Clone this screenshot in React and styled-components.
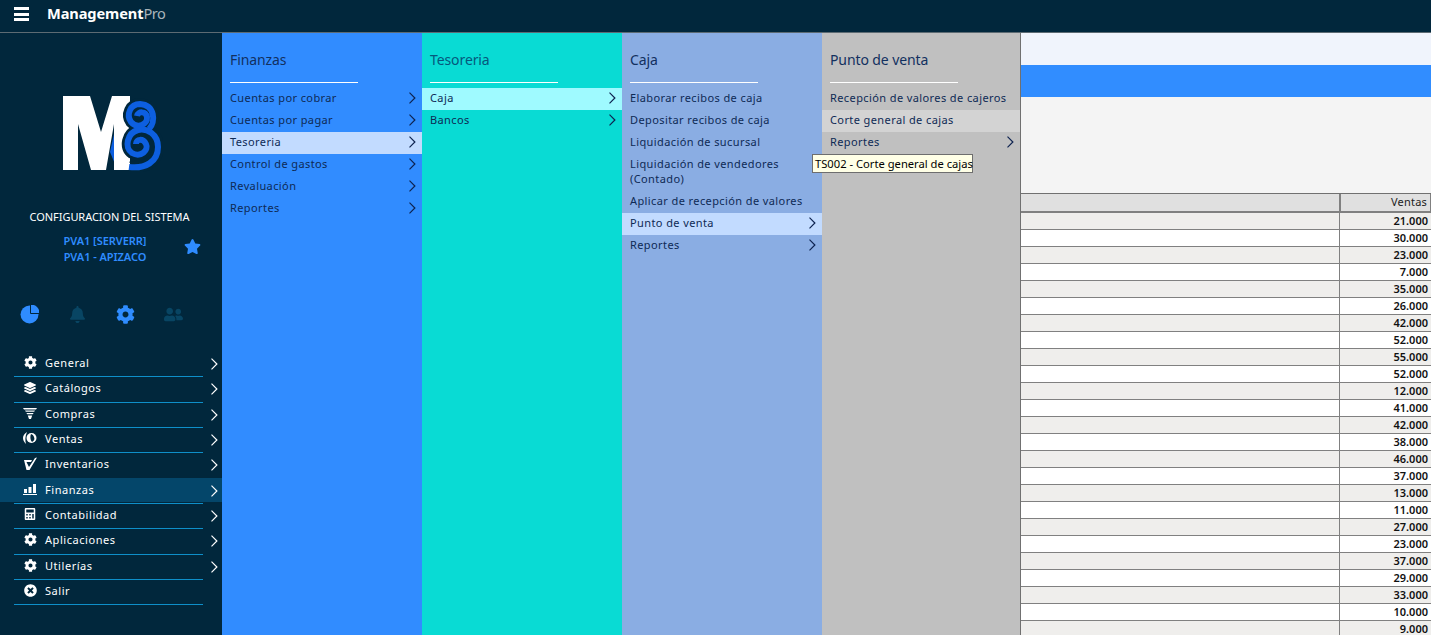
import React from "react";
import styled, { createGlobalStyle } from "styled-components";
import { FaCog, FaBell, FaUserFriends, FaStar, FaLayerGroup, FaTimesCircle, FaCalculator } from "react-icons/fa";

const Global = createGlobalStyle`
  html, body { margin: 0; padding: 0; height: 100%; overflow: hidden; background: #f4f4f4; }
  * { box-sizing: border-box; }
  body { font-family: "Noto Sans", "Open Sans", sans-serif; }
`;

const Page = styled.div`
  width: 1431px; height: 635px; display: flex; flex-direction: column; overflow: hidden; position: relative;
`;
const TopBar = styled.header`
  height: 33px; flex: none; background: #01273c; border-bottom: 1px solid #5d6b73;
  display: flex; align-items: center; padding: 0 0 4px 14px;
`;
const Burger = styled.div`
  width: 15px; height: 14px; display: flex; flex-direction: column; justify-content: space-between;
  & > i { display: block; height: 3px; background: #fff; }
`;
const Brand = styled.div`
  margin: 0 0 2px 18px; font-size: 14.6px; font-weight: 700; color: #fff; letter-spacing: -0.1px; line-height: 20px;
  & > span { font-weight: 400; color: #a9b4ba; letter-spacing: -0.5px; }
`;
const Body = styled.div`
  flex: 1; display: flex; min-height: 0;
`;
const Sidebar = styled.aside`
  width: 222px; flex: none; background: #01273c; display: flex; flex-direction: column; align-items: stretch;
`;
const LogoWrap = styled.div`
  height: 174px; display: flex; padding: 63px 0 0 63px; flex: none;
`;
const SysTitle = styled.div`
  color: #fff; font-size: 11px; line-height: 14px; text-align: center; padding-right: 3px; margin-top: 3px; letter-spacing: -0.05px;
`;
const Branch = styled.div`
  position: relative; margin-top: 9px; padding: 0 12px 0 0; text-align: center; color: #2f8cff;
  font-size: 11px; font-weight: 600; line-height: 16px; letter-spacing: -0.05px;
  & > svg { position: absolute; right: 21px; top: 5px; }
`;
const Quick = styled.div`
  display: flex; gap: 28px; padding: 0 0 0 19px; margin-top: 39px; height: 47px; flex: none;
`;
const QuickIcon = styled.div`
  width: 20px; height: 20px; display: flex; align-items: center; justify-content: center;
  color: ${p => p.$on ? "#2f8cff" : "#084563"};
`;
const Menu = styled.nav`
  display: flex; flex-direction: column;
`;
const MenuRow = styled.div`
  height: 25.33px; position: relative; display: flex; align-items: center; padding: 0 0 2.4px 23px;
  color: #fff; font-size: 11px; letter-spacing: 0.55px;
  background: ${p => p.$on ? "linear-gradient(#04466a 0 24px, transparent 24px)" : "none"};
  &::after { content: ""; position: absolute; left: 14px; width: 189px; bottom: -1px; height: 1px; background: #0e8fc9; }
`;
const MenuIcon = styled.span`
  width: 14px; height: 14px; display: flex; align-items: center; justify-content: center; margin-right: 8px; color: #fff;
`;
const MenuChev = styled.span`
  position: absolute; right: 4px; top: 7px; display: flex;
`;
const Panel = styled.section`
  width: ${p => p.$w}px; flex: none; background: ${p => p.$bg}; color: #0e2a55; padding-top: 19px; position: relative;
`;
const PanelTitle = styled.h2`
  margin: 0; font-weight: 400; font-size: 14px; line-height: 16px; padding-left: 8px; color: ${p => p.$c || "#12305f"}; letter-spacing: -0.1px;
`;
const Rule = styled.div`
  margin: 14px 0 5px 8px; width: 128px; height: 1px; background: #fff;
`;
const Row = styled.div`
  min-height: 22px; padding: 2px ${p => p.$ch ? 20 : 8}px 5px 8px; font-size: 11px; line-height: 15px; letter-spacing: 0.4px;
  position: relative; background: ${p => p.$hl || "none"}; color: #0e2a55;
`;
const RowChev = styled.span`
  position: absolute; right: 6px; top: 4px; display: flex;
`;
const Tip = styled.div`
  position: absolute; left: -10px; top: 121px; width: 161px; height: 19px; z-index: 3;
  background: #ffffe6; border: 1px solid #6e6e6e; color: #000; font-size: 11.2px; line-height: 17px; padding-left: 2px; white-space: nowrap;
`;
const Main = styled.main`
  flex: 1; min-width: 0; border-left: 1px solid #707070; display: flex; flex-direction: column; background: #f4f4f4;
`;
const BandLight = styled.div`height: 32px; flex: none; background: #f0f4fc;`;
const BandBlue = styled.div`height: 32px; flex: none; background: #318dff;`;
const Filter = styled.div`height: 96px; flex: none; background: #f4f4f4;`;
const Grid = styled.div`
  display: grid; grid-template-columns: 319px 91px; grid-template-rows: 19px; grid-auto-rows: 17px; border-top: 1px solid #707070;
`;
const Head = styled.div`
  height: 19px; background: #e0e0e0; border-bottom: 2px solid #808080; border-right: 1px solid #808080;
  font-size: 11px; line-height: 16px; text-align: right; padding-right: 3px; color: #222;
  letter-spacing: 0.2px;
  &:last-of-type { border-left: 1px solid #808080; border-right: 1px solid #808080; }
`;
const HeadRow = styled.div`
  grid-column: 1 / 3; display: grid; grid-template-columns: 319px 91px; height: 19px;
`;
const Cell = styled.div`
  background: ${p => p.$odd ? "#efeeec" : "#fff"}; border-bottom: 1px solid #808080; border-right: ${p => p.$first ? "1px solid #808080" : "none"};
  font-size: 11px; font-weight: 600; line-height: 16px; text-align: right; padding-right: 3px; color: #111;
`;

const Chev = ({ c = "#0e2350", s = 12 }) => (
  <svg width={s * 0.7} height={s} viewBox="0 0 7 12" fill="none" stroke={c} strokeWidth="1.2"><path d="M0.8 0.6 L6.2 6 L0.8 11.4" /></svg>
);

const swirlTop = "M86 33 C93 26 92 9 77 8 C67 8 63 19 68 26 C74 33 85 29 84 21 C83 15 75 15 74 20";
const swirlLow = "M66 71 C82 73 95 66 95 51 C95 38 84 32 75 34 C64 37 61 52 69 57 C78 62 86 54 83 48 C80 42 73 43 73 48";

const Logo = () => (
  <svg width="100" height="76" viewBox="0 0 100 76">
    <path d="M54 25 L47 56 L52 68 L56 66 Z" fill="#0d5fe0" />
    <path d="M0 0 H27 L38 36 L49 0 H67 V74 H51 V28 L43 74 H28 L15 28 V74 H0 Z" fill="#fff" />
    <g fill="none" stroke="#01273c" strokeWidth="11.500">
      <path d={swirlTop} />
      <path d={swirlLow} />
    </g>
    <path d="M63 74 H72 V80 H63Z" fill="#01273c" />
    <path d="M64 74 V67 L67 67 V74Z" fill="#fff" />
    <g fill="none" stroke="#0d5fe0" strokeWidth="6">
      <path d={swirlTop} />
      <path d={swirlLow} />
    </g>
  </svg>
);

const Pie = () => (
  <svg width="19" height="19" viewBox="0 0 19 19">
    <circle cx="9.500" cy="9.500" r="9" fill="#2f8cff" />
    <path d="M9.500 0 V9.500 H19" fill="none" stroke="#01273c" strokeWidth="1" transform="translate(1,-1)" />
    <path d="M10 0.500 A8.500 8.500 0 0 1 18.500 9 H10 Z" fill="#2f8cff" transform="translate(1,-1)" />
  </svg>
);
const Basket = () => (
  <svg width="14" height="12" viewBox="0 0 14 12" fill="#fff"><path d="M0 1h14l-1 1.500H1zM2 3.500h10l-.8 1.200H2.800zM3.400 6h7.200l-.8 1.200H4.200zM4.800 8.400h4.400L8 12H6z" /></svg>
);
const Moon = () => (
  <svg width="14" height="14" viewBox="0 0 14 14"><path d="M4 1C1 3 0 5 0 7c0 2 1 4 3 6C2 10 2 5 4 1Z" fill="#fff"/><circle cx="8.500" cy="7" r="5" fill="#fff"/><path d="M8 3c-1 2-1 6 1 8 2-1 3-3 2-5-.4-1.500-1.500-2.600-3-3Z" fill="#01273c"/></svg>
);
const Check = () => (
  <svg width="14" height="13" viewBox="0 0 14 13" fill="#fff"><path d="M1 3h8L8 5H3.500l2.500 5L12 1l2-.5L6.500 13H3.500z" /></svg>
);
const Bars = () => (
  <svg width="14" height="12" viewBox="0 0 14 12" fill="#fff"><path d="M1 6h3v4H1zM5.500 4h3v6h-3zM10 1h3v9h-3zM0 11h14v1H0z" /></svg>
);

const menu = [
  ["General", <FaCog size={13} />], ["Catálogos", <FaLayerGroup size={12} />], ["Compras", <Basket />], ["Ventas", <Moon />],
  ["Inventarios", <Check />], ["Finanzas", <Bars />, true], ["Contabilidad", <FaCalculator size={12} />],
  ["Aplicaciones", <FaCog size={13} />], ["Utilerías", <FaCog size={13} />], ["Salir", <FaTimesCircle size={13} />],
];
const values = ["21.000","30.000","23.000","7.000","35.000","26.000","42.000","52.000","55.000","52.000","12.000","41.000","42.000","38.000","46.000","37.000","13.000","11.000","27.000","23.000","37.000","29.000","33.000","10.000","9.000"];

const panels = [
  { title: "Finanzas", bg: "#318cff", w: 200, rows: [["Cuentas por cobrar",1],["Cuentas por pagar",1],["Tesoreria",1,"#c2dbff"],["Control de gastos",1],["Revaluación",1],["Reportes",1]] },
  { title: "Tesoreria", bg: "#09dbd4", w: 200, tc: "#06587c", rows: [["Caja",1,"#9ffaff"],["Bancos",1]] },
  { title: "Caja", bg: "#8aade3", w: 200, rows: [["Elaborar recibos de caja"],["Depositar recibos de caja"],["Liquidación de sucursal"],["Liquidación de vendedores (Contado)"],["Aplicar de recepción de valores"],["Punto de venta",1,"#c2dbff"],["Reportes",1]] },
  { title: "Punto de venta", bg: "#c0c0c0", w: 198, tip: true, rows: [["Recepción de valores de cajeros"],["Corte general de cajas",0,"#d3d3d3"],["Reportes",1]] },
];

export default function App() {
  return (
    <Page>
      <Global />
      <TopBar>
        <Burger><i /><i /><i /></Burger>
        <Brand>Management<span>Pro</span></Brand>
      </TopBar>
      <Body>
        <Sidebar>
          <LogoWrap><Logo /></LogoWrap>
          <SysTitle>CONFIGURACION DEL SISTEMA</SysTitle>
          <Branch>
            PVA1 [SERVERR]<br />PVA1 - APIZACO
            <FaStar size={17} />
          </Branch>
          <Quick>
            <QuickIcon $on><Pie /></QuickIcon>
            <QuickIcon><FaBell size={17} /></QuickIcon>
            <QuickIcon $on><FaCog size={19} /></QuickIcon>
            <QuickIcon><FaUserFriends size={19} /></QuickIcon>
          </Quick>
          <Menu>
            {menu.map(([t, ic, on]) => (
              <MenuRow key={t} $on={on}>
                <MenuIcon>{ic}</MenuIcon>{t}
                {t !== "Salir" && <MenuChev><Chev c="#fff" /></MenuChev>}
              </MenuRow>
            ))}
          </Menu>
        </Sidebar>
        {panels.map(p => (
          <Panel key={p.title} $bg={p.bg} $w={p.w}>
            <PanelTitle $c={p.tc}>{p.title}</PanelTitle>
            <Rule />
            {p.rows.map(([t, ch, hl]) => (
              <Row key={t} $hl={hl} $ch={ch}>{t}{ch ? <RowChev><Chev /></RowChev> : null}</Row>
            ))}
            {p.tip && <Tip>TS002 - Corte general de cajas</Tip>}
          </Panel>
        ))}
        <Main>
          <BandLight />
          <BandBlue />
          <Filter />
          <Grid>
            <HeadRow><Head /><Head>Ventas</Head></HeadRow>
            {values.map((v, i) => (
              <React.Fragment key={i}>
                <Cell $odd={i % 2 === 0} $first />
                <Cell $odd={i % 2 === 0}>{v}</Cell>
              </React.Fragment>
            ))}
          </Grid>
        </Main>
      </Body>
    </Page>
  );
}
